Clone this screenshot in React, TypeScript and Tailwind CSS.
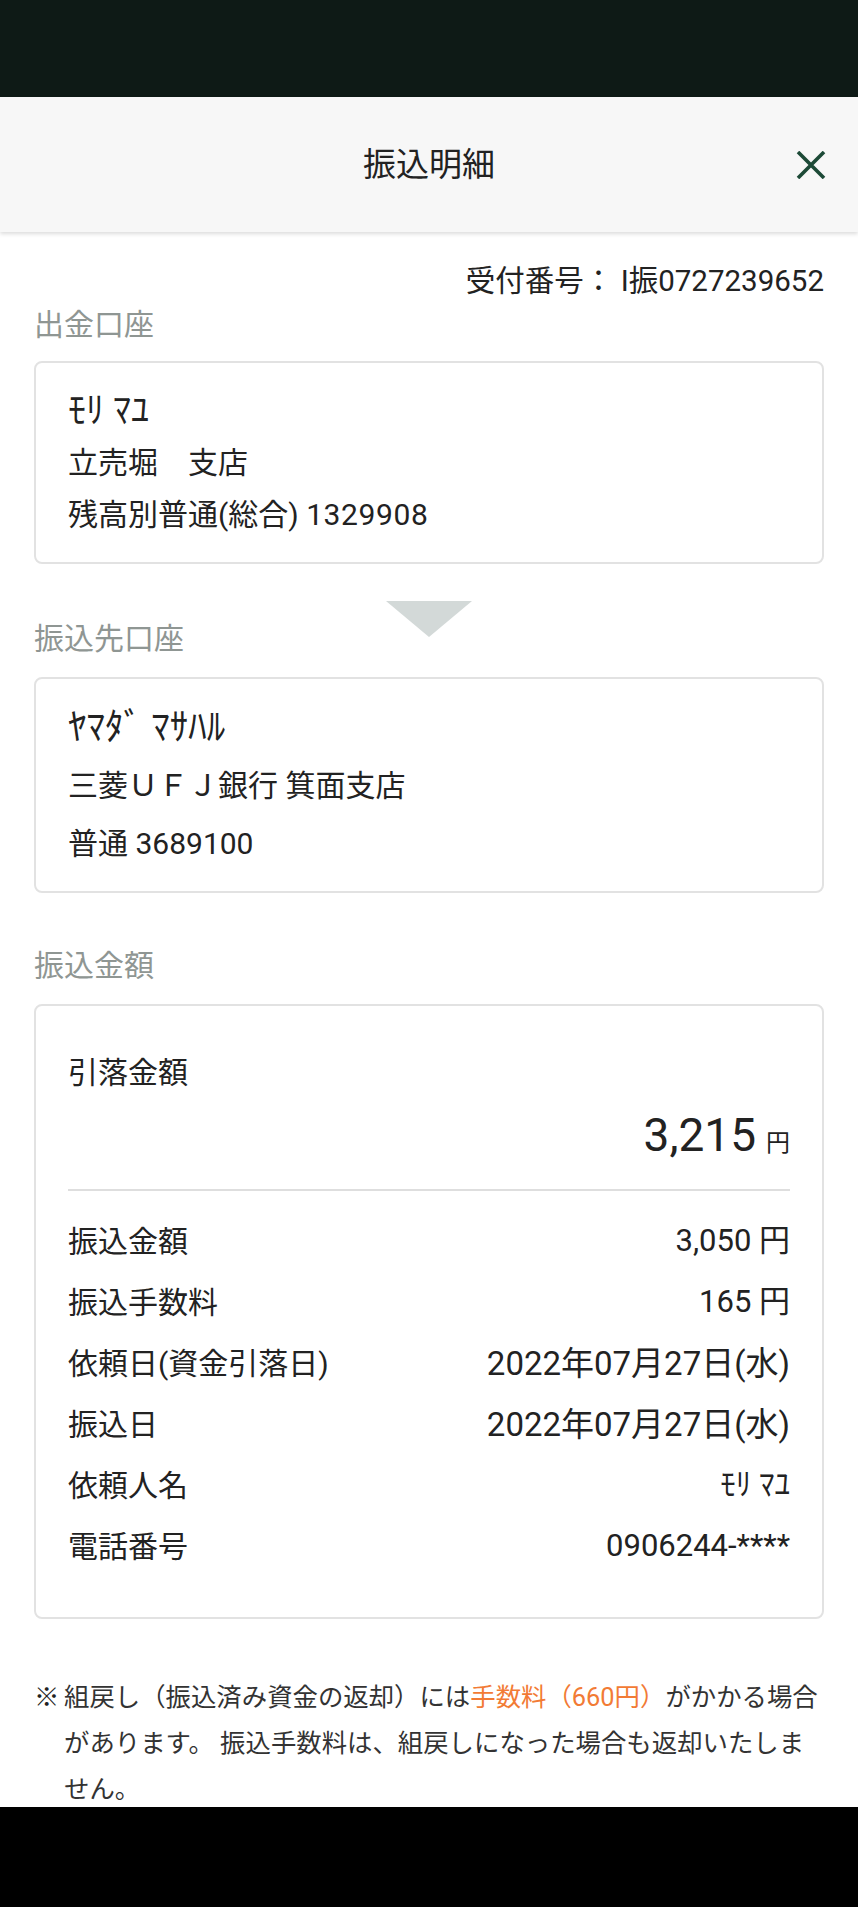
import React from 'react';

type Row = { label: string; value: string; size?: string };

const rows: Row[] = [
  { label: '振込金額', value: '3,050 円' },
  { label: '振込手数料', value: '165 円' },
  { label: '依頼日(資金引落日)', value: '2022年07月27日(水)', size: 'text-[33px]' },
  { label: '振込日', value: '2022年07月27日(水)', size: 'text-[33px]' },
  { label: '依頼人名', value: 'ﾓﾘ ﾏﾕ' },
  { label: '電話番号', value: '0906244-****' },
];

function SectionLabel({ children, className = '' }: { children: React.ReactNode; className?: string }) {
  return <p className={`text-[30px] leading-[40px] text-[#8f9693] ${className}`}>{children}</p>;
}

export default function App() {
  return (
    <div className="flex h-[1907px] w-full flex-col overflow-hidden bg-white font-[Roboto,'Noto_Sans_CJK_JP',sans-serif] text-[#222]">
      {/* status bar */}
      <div className="h-[97px] shrink-0 bg-[#0e1a16]" />

      <header className="relative z-10 flex h-[135px] shrink-0 items-center bg-[#f7f7f7] shadow-[0_2px_4px_rgba(0,0,0,0.14)]">
        <div className="w-[80px]" />
        <h1 className="flex-1 text-center text-[33px] leading-none text-[#222]">振込明細</h1>
        <div className="flex w-[80px] justify-end pr-[32px]">
          <button type="button" aria-label="閉じる" className="flex h-[30px] w-[30px] items-center justify-center">
            <svg width="30" height="28" viewBox="0 0 30 28" fill="none">
              <path d="M2 1 L28 27 M28 1 L2 27" stroke="#1d4a37" strokeWidth="3.6" />
            </svg>
          </button>
        </div>
      </header>

      <main className="flex-1 overflow-hidden px-[34px]">
        <p className="mt-[29px] text-right text-[29.5px] leading-[40px]">受付番号： I振0727239652</p>

        <SectionLabel className="mt-[4px]">出金口座</SectionLabel>
        <div className="mt-[16px] rounded-[8px] border-2 border-[#e2e2e2] px-[32px] pt-[22px] pb-[21px] text-[30px] leading-[52px]">
          <p className="text-[36px]">ﾓﾘ ﾏﾕ</p>
          <p>立売堀　支店</p>
          <p>残高別普通(総合) <span className="tracking-[0.6px]">1329908</span></p>
        </div>

        <div className="mt-[37px] grid">
          <svg
            className="col-start-1 row-start-1 self-start justify-self-center"
            width="86"
            height="36"
            viewBox="0 0 86 36"
          >
            <polygon points="0,0 86,0 43,36" fill="#d3d9d8" />
          </svg>
          <SectionLabel className="col-start-1 row-start-1 mt-[18px]">振込先口座</SectionLabel>
        </div>
        <div className="mt-[18px] rounded-[8px] border-2 border-[#e2e2e2] px-[32px] pt-[20px] pb-[18px] text-[30px] leading-[58px]">
          <p className="text-[37px]">ﾔﾏﾀﾞ ﾏｻﾊﾙ</p>
          <p>三菱ＵＦＪ銀行 箕面支店</p>
          <p>普通 3689100</p>
        </div>

        <SectionLabel className="mt-[53px]">振込金額</SectionLabel>
        <div className="mt-[18px] rounded-[8px] border-2 border-[#e2e2e2] px-[32px] pt-[47px] pb-[40px]">
          <p className="text-[30px] leading-[40px]">引落金額</p>
          <div className="mt-[14px] flex h-[56px] items-baseline justify-end leading-[56px]">
            <span className="text-[46px]">3,215</span>
            <span className="ml-[10px] text-[24px]">円</span>
          </div>
          <div className="mt-[26px] h-[2px] bg-[#dedede]" />
          <div className="mt-[20px] flex flex-col">
            {rows.map((row) => (
              <div key={row.label} className="flex h-[61px] items-center justify-between">
                <span className="text-[30px]">{row.label}</span>
                <span className={row.size ?? 'text-[31px]'}>{row.value}</span>
              </div>
            ))}
          </div>
        </div>

        <div className="mt-[55px] flex text-[25.4px] leading-[46px] text-[#333]">
          <span className="w-[30px] shrink-0 font-bold text-[#222]">※</span>
          <p className="flex-1 whitespace-nowrap">
            組戻し（振込済み資金の返却）には<span className="text-[#f27b35]">手数料（660円）</span>がかかる場合
            <br />
            があります。 振込手数料は、組戻しになった場合も返却いたしま
            <br />
            せん。
          </p>
        </div>
      </main>

      {/* navigation bar */}
      <div className="h-[100px] shrink-0 bg-black" />
    </div>
  );
}
